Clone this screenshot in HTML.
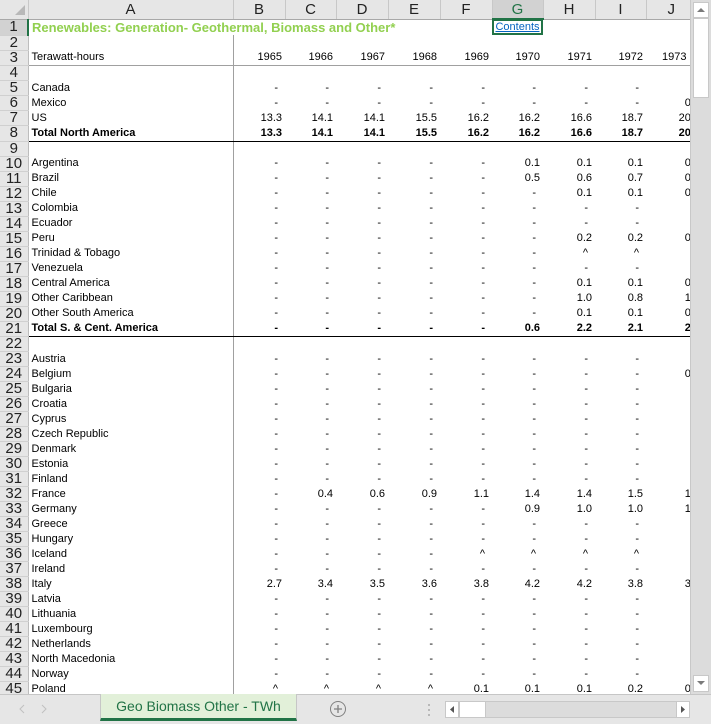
<!DOCTYPE html>
<html><head><meta charset="utf-8"><style>
*{margin:0;padding:0;box-sizing:border-box}
body{width:711px;height:724px;overflow:hidden;background:#fff;font-family:"Liberation Sans",Arial,sans-serif;position:relative}
#grid{position:absolute;left:0;top:0;width:690px;height:694px;overflow:hidden}
table{border-collapse:collapse;table-layout:fixed;width:703px}
td{height:15px;font-size:11px;white-space:nowrap;overflow:hidden;color:#000;padding:0 3px 0 0;text-align:right;line-height:15px;vertical-align:bottom}
td.r{background:#e6e6e6;color:#222;font-size:15px;font-weight:normal!important;text-align:center;padding:0;border-right:1px solid #bdbdbd;border-bottom:1px solid #d0d0d0;line-height:14px;vertical-align:middle}
td.a{text-align:left;padding-left:3px;border-right:1px solid #a0a0a0}
tr.h td{height:19px;background:#e6e6e6;font-size:15px;text-align:center;padding:0;border-right:1px solid #c8c8c8;border-bottom:1px solid #a8a8a8;color:#222;vertical-align:middle}
tr.b td{font-weight:bold}
tr.lg td:not(.r){border-bottom:1px solid #a0a0a0}
tr.lk td:not(.r){border-bottom:1px solid #000}
.d{padding-right:7px}
#vs{position:absolute;left:690px;top:0;width:21px;height:694px;background:#dcdcdc;border-left:1px solid #c8c8c8}
#bar{position:absolute;left:0;top:694px;width:711px;height:30px;background:#e6e6e6;border-top:1px solid #c6c6c6}
</style></head><body>
<div id="grid"><table>
<colgroup><col style="width:28px"><col style="width:205px"><col style="width:52px"><col style="width:51px"><col style="width:52px"><col style="width:52px"><col style="width:52px"><col style="width:51px"><col style="width:52px"><col style="width:51px"><col style="width:57px"></colgroup>
<tr class="h"><td style="background:#e6e6e6"><svg width="12" height="12" style="position:relative;left:6px;top:2px"><path d="M11 1 L11 11 L1 11 Z" fill="#b8b8b8"/></svg></td><td>A</td><td>B</td><td>C</td><td>D</td><td>E</td><td>F</td><td style="background:#d2d2d2;color:#217346;border-bottom:2px solid #217346">G</td><td>H</td><td>I</td><td style="text-align:left;padding-left:21px">J</td></tr>
<tr><td class="r" style="background:#d2d2d2;border-right:2px solid #217346">1</td><td class="a" colspan="6" style="color:#92d050;font-weight:bold;font-size:13px;border-right:none">Renewables: Generation- Geothermal, Biomass and Other*</td><td style="text-align:center;padding:0;outline:2px solid #217346;outline-offset:-2px"><span style="color:#0563c1;text-decoration:underline">Contents</span></td><td></td><td></td><td></td></tr>
<tr><td class="r">2</td><td class="a"></td><td></td><td></td><td></td><td></td><td></td><td></td><td></td><td></td><td></td></tr>
<tr class="lg"><td class="r">3</td><td class="a">Terawatt-hours</td><td>1965</td><td>1966</td><td>1967</td><td>1968</td><td>1969</td><td>1970</td><td>1971</td><td>1972</td><td style="text-align:left;padding-left:16px">1973</td></tr>
<tr><td class="r">4</td><td class="a"></td><td></td><td></td><td></td><td></td><td></td><td></td><td></td><td></td><td></td></tr>
<tr><td class="r">5</td><td class="a">Canada</td><td class="d">-</td><td class="d">-</td><td class="d">-</td><td class="d">-</td><td class="d">-</td><td class="d">-</td><td class="d">-</td><td class="d">-</td><td></td></tr>
<tr><td class="r">6</td><td class="a">Mexico</td><td class="d">-</td><td class="d">-</td><td class="d">-</td><td class="d">-</td><td class="d">-</td><td class="d">-</td><td class="d">-</td><td class="d">-</td><td>0.0</td></tr>
<tr><td class="r">7</td><td class="a">US</td><td>13.3</td><td>14.1</td><td>14.1</td><td>15.5</td><td>16.2</td><td>16.2</td><td>16.6</td><td>18.7</td><td>20.0</td></tr>
<tr class="b lk"><td class="r">8</td><td class="a">Total North America</td><td>13.3</td><td>14.1</td><td>14.1</td><td>15.5</td><td>16.2</td><td>16.2</td><td>16.6</td><td>18.7</td><td>20.0</td></tr>
<tr><td class="r">9</td><td class="a"></td><td></td><td></td><td></td><td></td><td></td><td></td><td></td><td></td><td></td></tr>
<tr><td class="r">10</td><td class="a">Argentina</td><td class="d">-</td><td class="d">-</td><td class="d">-</td><td class="d">-</td><td class="d">-</td><td>0.1</td><td>0.1</td><td>0.1</td><td>0.1</td></tr>
<tr><td class="r">11</td><td class="a">Brazil</td><td class="d">-</td><td class="d">-</td><td class="d">-</td><td class="d">-</td><td class="d">-</td><td>0.5</td><td>0.6</td><td>0.7</td><td>0.8</td></tr>
<tr><td class="r">12</td><td class="a">Chile</td><td class="d">-</td><td class="d">-</td><td class="d">-</td><td class="d">-</td><td class="d">-</td><td class="d">-</td><td>0.1</td><td>0.1</td><td>0.1</td></tr>
<tr><td class="r">13</td><td class="a">Colombia</td><td class="d">-</td><td class="d">-</td><td class="d">-</td><td class="d">-</td><td class="d">-</td><td class="d">-</td><td class="d">-</td><td class="d">-</td><td></td></tr>
<tr><td class="r">14</td><td class="a">Ecuador</td><td class="d">-</td><td class="d">-</td><td class="d">-</td><td class="d">-</td><td class="d">-</td><td class="d">-</td><td class="d">-</td><td class="d">-</td><td></td></tr>
<tr><td class="r">15</td><td class="a">Peru</td><td class="d">-</td><td class="d">-</td><td class="d">-</td><td class="d">-</td><td class="d">-</td><td class="d">-</td><td>0.2</td><td>0.2</td><td>0.2</td></tr>
<tr><td class="r">16</td><td class="a">Trinidad &amp; Tobago</td><td class="d">-</td><td class="d">-</td><td class="d">-</td><td class="d">-</td><td class="d">-</td><td class="d">-</td><td class="d">^</td><td class="d">^</td><td></td></tr>
<tr><td class="r">17</td><td class="a">Venezuela</td><td class="d">-</td><td class="d">-</td><td class="d">-</td><td class="d">-</td><td class="d">-</td><td class="d">-</td><td class="d">-</td><td class="d">-</td><td></td></tr>
<tr><td class="r">18</td><td class="a">Central America</td><td class="d">-</td><td class="d">-</td><td class="d">-</td><td class="d">-</td><td class="d">-</td><td class="d">-</td><td>0.1</td><td>0.1</td><td>0.1</td></tr>
<tr><td class="r">19</td><td class="a">Other Caribbean</td><td class="d">-</td><td class="d">-</td><td class="d">-</td><td class="d">-</td><td class="d">-</td><td class="d">-</td><td>1.0</td><td>0.8</td><td>1.0</td></tr>
<tr><td class="r">20</td><td class="a">Other South America</td><td class="d">-</td><td class="d">-</td><td class="d">-</td><td class="d">-</td><td class="d">-</td><td class="d">-</td><td>0.1</td><td>0.1</td><td>0.1</td></tr>
<tr class="b lk"><td class="r">21</td><td class="a">Total S. &amp; Cent. America</td><td class="d">-</td><td class="d">-</td><td class="d">-</td><td class="d">-</td><td class="d">-</td><td>0.6</td><td>2.2</td><td>2.1</td><td>2.4</td></tr>
<tr><td class="r">22</td><td class="a"></td><td></td><td></td><td></td><td></td><td></td><td></td><td></td><td></td><td></td></tr>
<tr><td class="r">23</td><td class="a">Austria</td><td class="d">-</td><td class="d">-</td><td class="d">-</td><td class="d">-</td><td class="d">-</td><td class="d">-</td><td class="d">-</td><td class="d">-</td><td></td></tr>
<tr><td class="r">24</td><td class="a">Belgium</td><td class="d">-</td><td class="d">-</td><td class="d">-</td><td class="d">-</td><td class="d">-</td><td class="d">-</td><td class="d">-</td><td class="d">-</td><td>0.1</td></tr>
<tr><td class="r">25</td><td class="a">Bulgaria</td><td class="d">-</td><td class="d">-</td><td class="d">-</td><td class="d">-</td><td class="d">-</td><td class="d">-</td><td class="d">-</td><td class="d">-</td><td></td></tr>
<tr><td class="r">26</td><td class="a">Croatia</td><td class="d">-</td><td class="d">-</td><td class="d">-</td><td class="d">-</td><td class="d">-</td><td class="d">-</td><td class="d">-</td><td class="d">-</td><td></td></tr>
<tr><td class="r">27</td><td class="a">Cyprus</td><td class="d">-</td><td class="d">-</td><td class="d">-</td><td class="d">-</td><td class="d">-</td><td class="d">-</td><td class="d">-</td><td class="d">-</td><td></td></tr>
<tr><td class="r">28</td><td class="a">Czech Republic</td><td class="d">-</td><td class="d">-</td><td class="d">-</td><td class="d">-</td><td class="d">-</td><td class="d">-</td><td class="d">-</td><td class="d">-</td><td></td></tr>
<tr><td class="r">29</td><td class="a">Denmark</td><td class="d">-</td><td class="d">-</td><td class="d">-</td><td class="d">-</td><td class="d">-</td><td class="d">-</td><td class="d">-</td><td class="d">-</td><td></td></tr>
<tr><td class="r">30</td><td class="a">Estonia</td><td class="d">-</td><td class="d">-</td><td class="d">-</td><td class="d">-</td><td class="d">-</td><td class="d">-</td><td class="d">-</td><td class="d">-</td><td></td></tr>
<tr><td class="r">31</td><td class="a">Finland</td><td class="d">-</td><td class="d">-</td><td class="d">-</td><td class="d">-</td><td class="d">-</td><td class="d">-</td><td class="d">-</td><td class="d">-</td><td></td></tr>
<tr><td class="r">32</td><td class="a">France</td><td class="d">-</td><td>0.4</td><td>0.6</td><td>0.9</td><td>1.1</td><td>1.4</td><td>1.4</td><td>1.5</td><td>1.6</td></tr>
<tr><td class="r">33</td><td class="a">Germany</td><td class="d">-</td><td class="d">-</td><td class="d">-</td><td class="d">-</td><td class="d">-</td><td>0.9</td><td>1.0</td><td>1.0</td><td>1.1</td></tr>
<tr><td class="r">34</td><td class="a">Greece</td><td class="d">-</td><td class="d">-</td><td class="d">-</td><td class="d">-</td><td class="d">-</td><td class="d">-</td><td class="d">-</td><td class="d">-</td><td></td></tr>
<tr><td class="r">35</td><td class="a">Hungary</td><td class="d">-</td><td class="d">-</td><td class="d">-</td><td class="d">-</td><td class="d">-</td><td class="d">-</td><td class="d">-</td><td class="d">-</td><td></td></tr>
<tr><td class="r">36</td><td class="a">Iceland</td><td class="d">-</td><td class="d">-</td><td class="d">-</td><td class="d">-</td><td class="d">^</td><td class="d">^</td><td class="d">^</td><td class="d">^</td><td></td></tr>
<tr><td class="r">37</td><td class="a">Ireland</td><td class="d">-</td><td class="d">-</td><td class="d">-</td><td class="d">-</td><td class="d">-</td><td class="d">-</td><td class="d">-</td><td class="d">-</td><td></td></tr>
<tr><td class="r">38</td><td class="a">Italy</td><td>2.7</td><td>3.4</td><td>3.5</td><td>3.6</td><td>3.8</td><td>4.2</td><td>4.2</td><td>3.8</td><td>3.9</td></tr>
<tr><td class="r">39</td><td class="a">Latvia</td><td class="d">-</td><td class="d">-</td><td class="d">-</td><td class="d">-</td><td class="d">-</td><td class="d">-</td><td class="d">-</td><td class="d">-</td><td></td></tr>
<tr><td class="r">40</td><td class="a">Lithuania</td><td class="d">-</td><td class="d">-</td><td class="d">-</td><td class="d">-</td><td class="d">-</td><td class="d">-</td><td class="d">-</td><td class="d">-</td><td></td></tr>
<tr><td class="r">41</td><td class="a">Luxembourg</td><td class="d">-</td><td class="d">-</td><td class="d">-</td><td class="d">-</td><td class="d">-</td><td class="d">-</td><td class="d">-</td><td class="d">-</td><td></td></tr>
<tr><td class="r">42</td><td class="a">Netherlands</td><td class="d">-</td><td class="d">-</td><td class="d">-</td><td class="d">-</td><td class="d">-</td><td class="d">-</td><td class="d">-</td><td class="d">-</td><td></td></tr>
<tr><td class="r">43</td><td class="a">North Macedonia</td><td class="d">-</td><td class="d">-</td><td class="d">-</td><td class="d">-</td><td class="d">-</td><td class="d">-</td><td class="d">-</td><td class="d">-</td><td></td></tr>
<tr><td class="r">44</td><td class="a">Norway</td><td class="d">-</td><td class="d">-</td><td class="d">-</td><td class="d">-</td><td class="d">-</td><td class="d">-</td><td class="d">-</td><td class="d">-</td><td></td></tr>
<tr><td class="r">45</td><td class="a">Poland</td><td class="d">^</td><td class="d">^</td><td class="d">^</td><td class="d">^</td><td>0.1</td><td>0.1</td><td>0.1</td><td>0.2</td><td>0.2</td></tr>
</table></div>
<div id="vs">
<div style="position:absolute;left:2px;top:2px;width:16px;height:16px;background:#fff;border:1px solid #c8c8c8"><svg width="14" height="14"><path d="M3 9 L7 5 L11 9 Z" fill="#7a7a7a"/></svg></div>
<div style="position:absolute;left:2px;top:18px;width:16px;height:80px;background:#fff;border:1px solid #c8c8c8"></div>
<div style="position:absolute;left:2px;top:675px;width:16px;height:17px;background:#fff;border:1px solid #c8c8c8"><svg width="14" height="14"><path d="M3 5 L7 9 L11 5 Z" fill="#7a7a7a"/></svg></div>
</div>
<div id="bar">
<svg style="position:absolute;left:18px;top:7px" width="30" height="14"><path d="M6 3 L2 7 L6 11" stroke="#c0c0c0" fill="none"/><path d="M24 3 L28 7 L24 11" stroke="#c0c0c0" fill="none"/></svg>
<div style="position:absolute;left:100px;top:-1px;width:197px;height:27px;background:#e2f0d9;border:1px solid #c6c6c6;border-top:none;border-bottom:3px solid #217346;color:#217346;font-size:14px;line-height:24px;text-align:center;white-space:nowrap;overflow:hidden">Geo Biomass Other - TWh</div>
<svg style="position:absolute;left:329px;top:5px" width="18" height="18"><circle cx="9" cy="9" r="7.5" stroke="#808080" fill="none"/><path d="M9 5 V13 M5 9 H13" stroke="#808080" stroke-width="1.3"/></svg>
<div style="position:absolute;left:445px;top:6px;width:245px;height:17px;background:#dcdcdc;border:1px solid #c8c8c8"></div>
<div style="position:absolute;left:445px;top:6px;width:14px;height:17px;background:#fff;border:1px solid #c8c8c8"><svg width="12" height="15"><path d="M8 4 L4 7.5 L8 11 Z" fill="#555"/></svg></div>
<div style="position:absolute;left:459px;top:6px;width:27px;height:17px;background:#fff;border:1px solid #c8c8c8"></div>
<div style="position:absolute;left:676px;top:6px;width:14px;height:17px;background:#fff;border:1px solid #c8c8c8"><svg width="12" height="15"><path d="M4 4 L8 7.5 L4 11 Z" fill="#555"/></svg></div>
<svg style="position:absolute;left:427px;top:8px" width="4" height="14"><circle cx="2" cy="2" r="1" fill="#aaa"/><circle cx="2" cy="7" r="1" fill="#aaa"/><circle cx="2" cy="12" r="1" fill="#aaa"/></svg>
</div>
</body></html>
